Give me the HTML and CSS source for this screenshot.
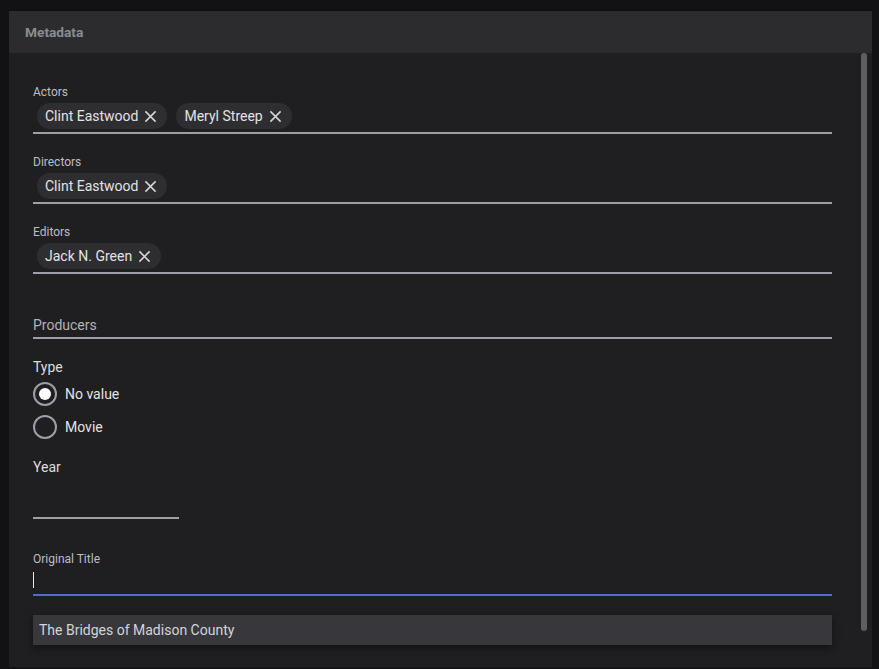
FILE: index.html
```html
<!DOCTYPE html>
<html lang="en">
<head>
<meta charset="utf-8">
<title>Metadata</title>
<link rel="stylesheet" href="styles.css">
</head>
<body>
<div class="panel">
  <div class="panel-header">Metadata</div>
  <div class="panel-body">
    <div class="content">
      <div class="chip-field">
        <div class="small-label">Actors</div>
        <div class="chips">
          <span class="chip">Clint Eastwood<svg class="x" viewBox="0 0 14 14"><path d="M1.5 1.5L12.5 12.5M12.5 1.5L1.5 12.5"/></svg></span>
          <span class="chip">Meryl Streep<svg class="x" viewBox="0 0 14 14"><path d="M1.5 1.5L12.5 12.5M12.5 1.5L1.5 12.5"/></svg></span>
        </div>
        <div class="line"></div>
      </div>
      <div class="chip-field">
        <div class="small-label">Directors</div>
        <div class="chips">
          <span class="chip">Clint Eastwood<svg class="x" viewBox="0 0 14 14"><path d="M1.5 1.5L12.5 12.5M12.5 1.5L1.5 12.5"/></svg></span>
        </div>
        <div class="line"></div>
      </div>
      <div class="chip-field">
        <div class="small-label">Editors</div>
        <div class="chips">
          <span class="chip">Jack N. Green<svg class="x" viewBox="0 0 14 14"><path d="M1.5 1.5L12.5 12.5M12.5 1.5L1.5 12.5"/></svg></span>
        </div>
        <div class="line"></div>
      </div>
      <div class="plain-field">
        <div class="placeholder">Producers</div>
        <div class="line"></div>
      </div>
      <div class="type-field">
        <div class="big-label">Type</div>
        <div class="radio-row"><span class="radio checked"><span class="dot"></span></span><span class="radio-text">No value</span></div>
        <div class="radio-row"><span class="radio"></span><span class="radio-text">Movie</span></div>
      </div>
      <div class="year-field">
        <div class="big-label">Year</div>
        <div class="line short"></div>
      </div>
      <div class="title-field">
        <div class="small-label">Original Title</div>
        <div class="input-row"><span class="cursor"></span></div>
        <div class="line focus"></div>
      </div>
      <div class="suggestion">The Bridges of Madison County</div>
    </div>
    <div class="scrollbar"></div>
  </div>
</div>
</body>
</html>
```
FILE: styles.css
```css
html, body {
  margin: 0;
  padding: 0;
  background: #121214;
  font-family: Roboto, "Noto Sans", "Liberation Sans", sans-serif;
  height: 100%;
  overflow: hidden;
}
body {
  padding: 11px 7px 0 9px;
  box-sizing: border-box;
}
.panel {
  width: 863px;
  height: 656px;
  background: #1f1f21;
  display: flex;
  flex-direction: column;
}
.panel-header {
  height: 42px;
  background: #2c2c2e;
  color: #8c8b91;
  font-size: 13.7px;
  font-weight: 700;
  line-height: 43px;
  padding-left: 16px;
  flex: none;
}
.panel-body {
  flex: 1;
  display: flex;
  min-height: 0;
  position: relative;
}
.content {
  flex: 1;
  padding: 32px 40px 0 24px;
  display: flex;
  flex-direction: column;
}
.scrollbar {
  position: absolute;
  right: 5px;
  top: 0;
  width: 6px;
  height: 578px;
  background: #5f5f61;
  border-radius: 3px;
}
.small-label {
  font-size: 12px;
  line-height: 14px;
  color: #bdbcc0;
}
.big-label {
  font-size: 14px;
  line-height: 16px;
  color: #dcdcdf;
}
.line {
  height: 2px;
  background: #a09da8;
}
.line.short {
  width: 146px;
}
.line.focus {
  background: #4c70c6;
}
.chip-field {
  margin-bottom: 21px;
}
.chips {
  display: flex;
  gap: 9px;
  margin: 4px 0 3px 4px;
}
.chip {
  height: 26px;
  border-radius: 13px;
  background: #2e2e31;
  color: #e2e2e5;
  font-size: 14px;
  display: inline-flex;
  align-items: center;
  padding: 0 10px 0 8px;
  gap: 6px;
}
.x {
  width: 13px;
  height: 13px;
  fill: none;
  stroke: #d8d8db;
  stroke-width: 1.6;
}
.plain-field {
  margin-top: 22px;
}
.placeholder {
  font-size: 14px;
  line-height: 16px;
  color: #b3b2b8;
  margin-bottom: 4px;
}
.type-field {
  margin-top: 20px;
  display: flex;
  flex-direction: column;
}
.radio-row {
  display: flex;
  align-items: center;
  height: 24px;
  gap: 8px;
  margin-top: 7px;
}
.radio-row + .radio-row {
  margin-top: 9px;
}
.radio {
  width: 24px;
  height: 24px;
  box-sizing: border-box;
  border: 2px solid #a09da8;
  border-radius: 50%;
  display: flex;
  align-items: center;
  justify-content: center;
}
.dot {
  width: 12px;
  height: 12px;
  border-radius: 50%;
  background: #ffffff;
}
.radio-text {
  font-size: 14px;
  color: #e2e2e5;
}
.year-field {
  margin-top: 20px;
}
.year-field .big-label {
  margin-bottom: 42px;
}
.title-field {
  margin-top: 33px;
}
.input-row {
  height: 28px;
  display: flex;
  align-items: center;
}
.cursor {
  width: 1px;
  height: 16px;
  background: #e6e6e6;
}
.suggestion {
  margin-top: 19px;
  height: 30px;
  background: #38383c;
  color: #d4d4d8;
  font-size: 14px;
  line-height: 30px;
  padding-left: 6px;
  box-shadow: 0 3px 8px rgba(0,0,0,0.45);
}
```
